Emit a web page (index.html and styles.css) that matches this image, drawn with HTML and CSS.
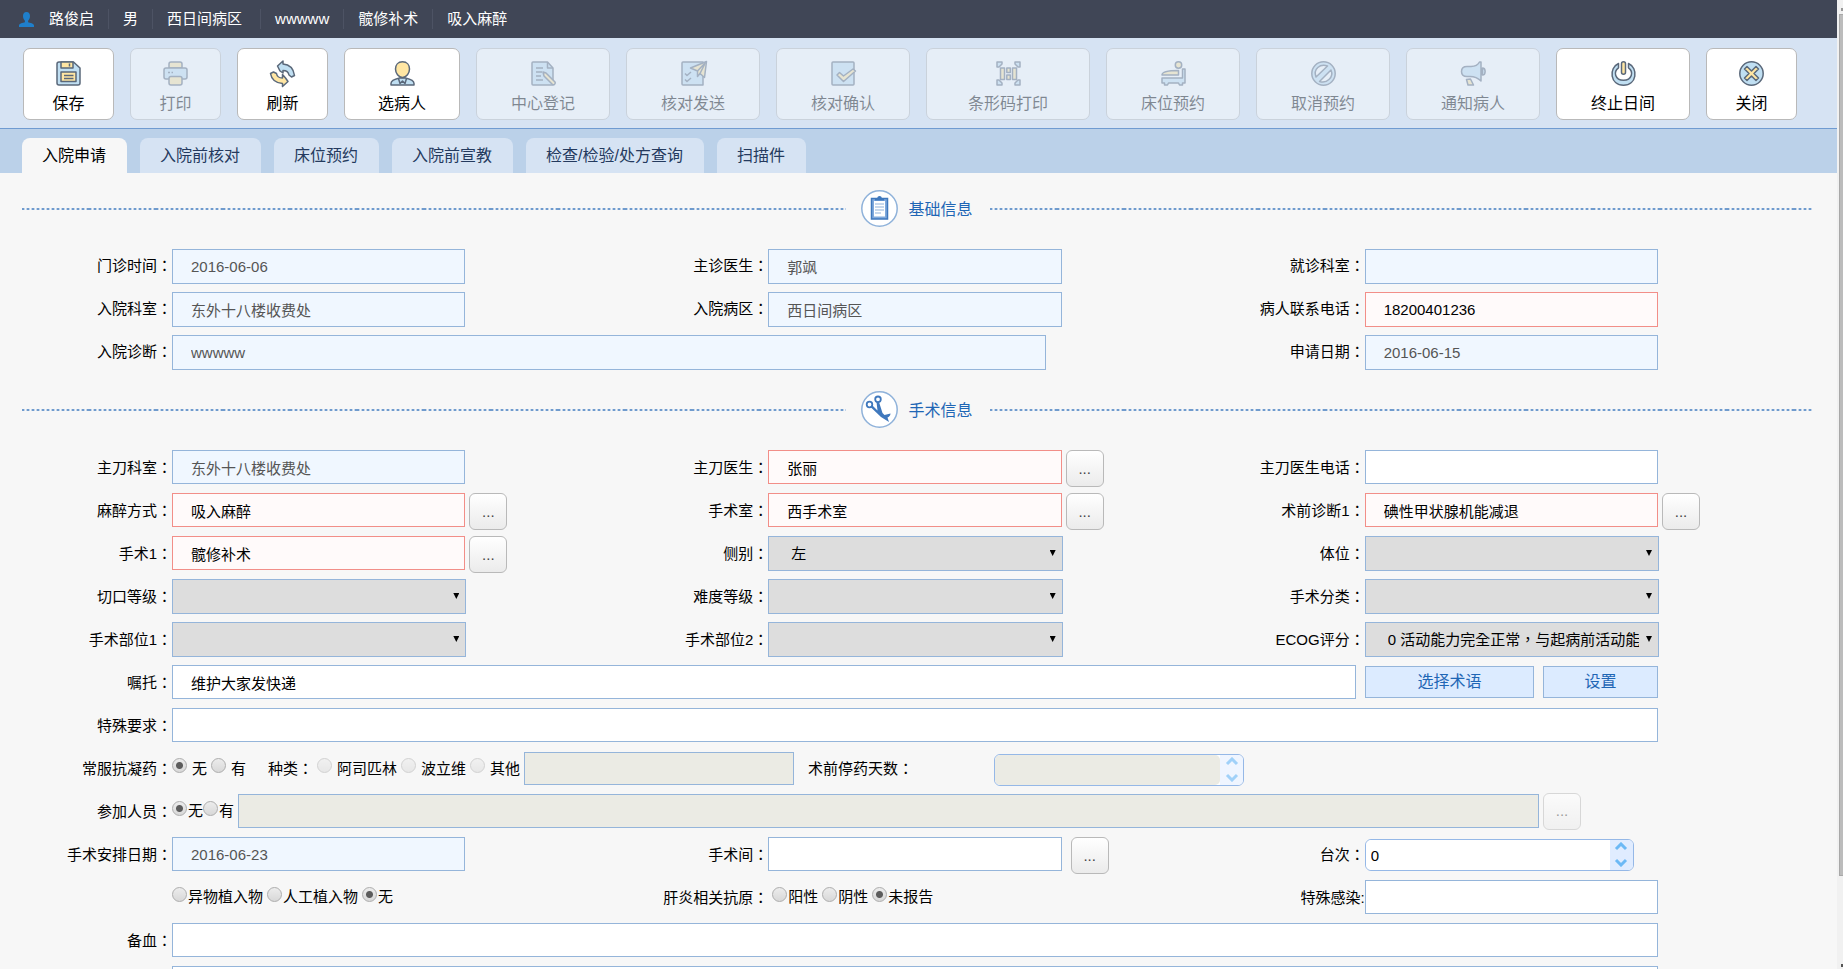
FILE: index.html
```html
<!DOCTYPE html>
<html lang="zh-CN">
<head>
<meta charset="utf-8">
<title>入院申请</title>
<link rel="stylesheet" href="styles.css">
</head>
<body>
<div class="page">
  <header class="patient">
    <svg class="avatar" viewBox="0 0 15 15" aria-hidden="true"><path d="M7.500 0C5 0 4 1.800 4 4c0 2 .8 3.800 1.900 4.700v1.500C4 10.800 0 11.300 0 13.500V15h15v-1.500c0-2.200-4-2.700-5.900-3.300V8.700C10.200 7.800 11 6 11 4c0-2.200-1-4-3.500-4z"/></svg>
    <ul class="patient-list">
      <li>路俊启</li><li>男</li><li class="ward">西日间病区</li><li>wwwww</li><li>髋修补术</li><li>吸入麻醉</li>
    </ul>
  </header>

  <div class="toolbar">
    <button type="button" class="tool w2">
      <svg viewBox="0 0 25 25"><path class="b" d="M3 1h14.500L24 7v15a2 2 0 0 1-2 2H3a2 2 0 0 1-2-2V3a2 2 0 0 1 2-2z"/><path class="y" d="M5 1h12v6H5zM5 11h15v9.500H5z"/><path class="n" d="M13.500 2.500v3M8 14.500h9.500M8 17.500h9.500"/></svg>
      <span>保存</span></button>
    <button type="button" class="tool w2" disabled>
      <svg viewBox="0 0 25 25"><path class="y" d="M6 7V3a2 2 0 0 1 2-2h9a2 2 0 0 1 2 2v4z"/><path class="b" d="M3 7h19a2 2 0 0 1 2 2v7a2 2 0 0 1-2 2H3a2 2 0 0 1-2-2V9a2 2 0 0 1 2-2z"/><path class="y" d="M8 15.500h9a2 2 0 0 1 2 2V22a2 2 0 0 1-2 2H8a2 2 0 0 1-2-2v-4.500a2 2 0 0 1 2-2z"/><path class="n" d="M5 11.500h2M8.500 11.500h1.500"/></svg>
      <span>打印</span></button>
    <button type="button" class="tool w2">
      <svg viewBox="0 0 25 25"><path class="b" d="M7.500 5 13 0v3c6 .5 10.500 4 11.500 11.500l-3 1.500-2.500-2c-.5-3-2.500-4.500-6-4.500V12L10 10z"/><path class="y" d="M18 20.500 12.500 25.500v-3C6 22 1.500 18.500.5 12.500L3.500 11l3 1.500c.5 3 2.500 4.500 6 4.500v-3.500l3 3.500z"/></svg>
      <span>刷新</span></button>
    <button type="button" class="tool w3">
      <svg viewBox="0 0 25 25"><path class="b" d="M1 24v-1.500c0-3 4-4.500 8.500-5.500h6c4.500 1 8.500 2.500 8.500 5.500V24z"/><path class="y" d="M12.500.8c4.500 0 7 3.200 7 7.200s-3 8.500-7 8.500S5.500 12 5.500 8s2.500-7.200 7-7.200z"/><path class="n" d="m8.500 17.500 1.500 5 2.500-2.500 2.500 2.500 1.500-5"/></svg>
      <span>选病人</span></button>
    <button type="button" class="tool w4" disabled>
      <svg viewBox="0 0 25 25"><path class="b" d="M2 1h14.500L22 7v17H2a1 1 0 0 1-1-1V2a1 1 0 0 1 1-1z"/><path class="n" d="M16.500 1v6H22M5 7h7M5 11h6M5 15h5M5 19h7"/><path class="y" d="m12 11 3 1 9 9c1 1.500-1 3.500-2.500 2.500L13 15z"/></svg>
      <span>中心登记</span></button>
    <button type="button" class="tool w4" disabled>
      <svg viewBox="0 0 25 25"><path class="b" d="M2 1h20v23H2a1 1 0 0 1-1-1V2a1 1 0 0 1 1-1z"/><path class="n" d="m4 12.500 2 2 4-3.500M4 18.500l2 2 4-3.500"/><path class="y" d="m9.500 7 16-6.500-2 16-4.500-4-2.500 3V10z"/><path class="n" d="m16.500 10 8-8.500-5.500 11"/></svg>
      <span>核对发送</span></button>
    <button type="button" class="tool w4" disabled>
      <svg viewBox="0 0 25 25"><path class="b" d="M2 1h20a1 1 0 0 1 1 1v21a1 1 0 0 1-1 1H2a1 1 0 0 1-1-1V2a1 1 0 0 1 1-1z"/><path class="y" d="m6 14 2.500-2.500 4 3.500L22 8l2.500 2-12 10.500z"/></svg>
      <span>核对确认</span></button>
    <button type="button" class="tool w5" disabled>
      <svg viewBox="0 0 25 25"><path class="b" d="M1 6V1h5v2L3 6zM24 6V1h-5v2l3 3zM1 19v5h5v-2l-3-3zM24 19v5h-5v-2l3-3z"/><path class="y" d="M4.500 7h4v11.500h-4zM16.500 7h4v11.500h-4zM10.800 7h3.500v4.500h-3.500zM10.800 14h3.500v4.500h-3.500z"/></svg>
      <span>条形码打印</span></button>
    <button type="button" class="tool w4" disabled>
      <svg viewBox="0 0 25 25"><circle class="y" cx="17.500" cy="4" r="3.200"/><path class="y" d="M1 14c0-3 7-4.500 16.500-4.500V14z"/><path class="b" d="M1 17h20.500V8H24v14h-2.500v2h-3l-1-2h-10l-1 2h-3v-2H1z"/></svg>
      <span>床位预约</span></button>
    <button type="button" class="tool w4" disabled>
      <svg viewBox="0 0 25 25"><circle class="b" cx="12.500" cy="12.500" r="11.700"/><path class="p" d="M5 16C2 8 9 2.500 16.500 5zM8.500 20.500 20 9c3 7-4 14-11.500 11.500z"/></svg>
      <span>取消预约</span></button>
    <button type="button" class="tool w4" disabled>
      <svg viewBox="0 0 25 25"><path class="b" d="M20 1v19c-3-3-7-4.500-11-4.500H6c-3.500 0-5.500-2-5.500-5s2-5 5.500-5h4C14 5.500 17 4 18.500 1zM21.500 7c3.500 0 3.500 7 0 7z"/><path class="y" d="m5.500 18.500 4-.5 3 6h-5.500z"/></svg>
      <span>通知病人</span></button>
    <button type="button" class="tool w4">
      <svg viewBox="0 0 25 25"><path class="b" d="M7.500 2.500C-2.500 7-1 24.200 12.500 24.200S27.500 7 17.500 2.500v4.300c5.500 4 3.500 12.500-5 12.500s-10.500-8.500-5-12.500z"/><rect class="y" x="10.500" y=".8" width="4" height="12.500" rx="2"/></svg>
      <span>终止日间</span></button>
    <button type="button" class="tool w2">
      <svg viewBox="0 0 25 25"><circle class="b" cx="12.500" cy="12.500" r="11.700"/><path class="y" d="m8 5.500 4.500 4.500L17 5.500 19.500 8 15 12.500l4.500 4.500-2.500 2.500-4.500-4.500L8 19.500 5.500 17l4.500-4.500L5.500 8z"/></svg>
      <span>关闭</span></button>
  </div>

  <nav class="tabs">
    <a class="tab active" href="#apply">入院申请</a>
    <a class="tab" href="#check">入院前核对</a>
    <a class="tab" href="#bed">床位预约</a>
    <a class="tab" href="#teach">入院前宣教</a>
    <a class="tab" href="#query">检查/检验/处方查询</a>
    <a class="tab" href="#scan">扫描件</a>
  </nav>

  <main id="apply">
    <div class="section-head">
      <i class="rule"></i>
      <svg class="badge" viewBox="0 0 37 37" aria-hidden="true"><circle cx="18.500" cy="18.500" r="17.700" fill="#fff" stroke="#8fb2da" stroke-width="1.500"/><path d="M10.500 8.500h16v20.500h-16z" fill="#7fa9dc" stroke="#3f78bd" stroke-width="1.500"/><path d="M13 11h11v15.500H13z" fill="#fff"/><path d="M14 10.500V8.200h2.300c0-3 4.500-3 4.500 0H23v2.300z" fill="#3f78bd"/><path d="M14 14h9M14 17h9M14 20h9M14 23h6" stroke="#8fb2da" stroke-width="1.200"/></svg>
      <h2>基础信息</h2>
      <i class="rule"></i>
    </div>
    <div class="form basic">
      <div class="cell"><label for="f1">门诊时间<span class="c" lang="zh-TW">：</span></label><input id="f1" class="ro" value="2016-06-06" readonly></div>
      <div class="cell"><label for="f2">主诊医生<span class="c" lang="zh-TW">：</span></label><input id="f2" class="ro" value="郭飒" readonly></div>
      <div class="cell"><label for="f3">就诊科室<span class="c" lang="zh-TW">：</span></label><input id="f3" class="ro" readonly></div>
      <div class="cell"><label for="f4">入院科室<span class="c" lang="zh-TW">：</span></label><input id="f4" class="ro" value="东外十八楼收费处" readonly></div>
      <div class="cell"><label for="f5">入院病区<span class="c" lang="zh-TW">：</span></label><input id="f5" class="ro" value="西日间病区" readonly></div>
      <div class="cell"><label for="f6">病人联系电话<span class="c" lang="zh-TW">：</span></label><input id="f6" class="must" value="18200401236"></div>
      <div class="cell two"><label for="f7">入院诊断<span class="c" lang="zh-TW">：</span></label><input id="f7" class="ro" value="wwwww" readonly></div>
      <div class="cell"><label for="f8">申请日期<span class="c" lang="zh-TW">：</span></label><input id="f8" class="ro" value="2016-06-15" readonly></div>
    </div>

    <div class="section-head">
      <i class="rule"></i>
      <svg class="badge" viewBox="0 0 37 37" aria-hidden="true"><circle cx="18.500" cy="18.500" r="17.700" fill="#fff" stroke="#8fb2da" stroke-width="1.500"/><g fill="none" stroke="#3f78bd" stroke-width="1.800"><circle cx="8.500" cy="13.500" r="2.800"/><circle cx="17" cy="8.300" r="2.800"/></g><path d="m9.500 16 2-1.500 5 5L15.500 11h2.500l3.500 11 2 2 6-1.500c0 2-1.500 3.500-3 4l1.500 4.500-8-5z" fill="#3f78bd"/></svg>
      <h2>手术信息</h2>
      <i class="rule"></i>
    </div>
    <div class="form surgery">
      <div class="cell"><label for="s1">主刀科室<span class="c" lang="zh-TW">：</span></label><input id="s1" class="ro" value="东外十八楼收费处" readonly></div>
      <div class="cell"><label for="s2">主刀医生<span class="c" lang="zh-TW">：</span></label><input id="s2" class="must" value="张丽"><button type="button" class="more">...</button></div>
      <div class="cell"><label for="s3">主刀医生电话<span class="c" lang="zh-TW">：</span></label><input id="s3"></div>

      <div class="cell"><label for="s4">麻醉方式<span class="c" lang="zh-TW">：</span></label><input id="s4" class="must" value="吸入麻醉"><button type="button" class="more">...</button></div>
      <div class="cell"><label for="s5">手术室<span class="c" lang="zh-TW">：</span></label><input id="s5" class="must" value="西手术室"><button type="button" class="more">...</button></div>
      <div class="cell"><label for="s6">术前诊断1<span class="c" lang="zh-TW">：</span></label><input id="s6" class="must" value="碘性甲状腺机能减退"><button type="button" class="more">...</button></div>

      <div class="cell"><label for="s7">手术1<span class="c" lang="zh-TW">：</span></label><input id="s7" class="must" value="髋修补术"><button type="button" class="more">...</button></div>
      <div class="cell"><label for="s8">侧别<span class="c" lang="zh-TW">：</span></label><div class="pick"><select id="s8"><option>左</option></select></div></div>
      <div class="cell"><label for="s9">体位<span class="c" lang="zh-TW">：</span></label><div class="pick"><select id="s9"><option></option></select></div></div>

      <div class="cell"><label for="s10">切口等级<span class="c" lang="zh-TW">：</span></label><div class="pick"><select id="s10"><option></option></select></div></div>
      <div class="cell"><label for="s11">难度等级<span class="c" lang="zh-TW">：</span></label><div class="pick"><select id="s11"><option></option></select></div></div>
      <div class="cell"><label for="s12">手术分类<span class="c" lang="zh-TW">：</span></label><div class="pick"><select id="s12"><option></option></select></div></div>

      <div class="cell"><label for="s13">手术部位1<span class="c" lang="zh-TW">：</span></label><div class="pick"><select id="s13"><option></option></select></div></div>
      <div class="cell"><label for="s14">手术部位2<span class="c" lang="zh-TW">：</span></label><div class="pick"><select id="s14"><option></option></select></div></div>
      <div class="cell"><label for="s15">ECOG评分<span class="c" lang="zh-TW">：</span></label><div class="pick"><select id="s15" class="c" lang="zh-TW"><option>0 活动能力完全正常，与起病前活动能力无任何差异</option></select></div></div>

      <div class="cell all"><label for="s16">嘱托<span class="c" lang="zh-TW">：</span></label><div class="line order"><input id="s16" class="grow" value="维护大家发快递"><button type="button" class="act term">选择术语</button><button type="button" class="act set">设置</button></div></div>
      <div class="cell all"><label for="s17">特殊要求<span class="c" lang="zh-TW">：</span></label><input id="s17"></div>

      <div class="cell all"><span class="label">常服抗凝药<span class="c" lang="zh-TW">：</span></span>
        <div class="line drug">
          <label class="opt wide"><input type="radio" name="drug" checked>无</label>
          <label class="opt wide"><input type="radio" name="drug">有</label>
          <span class="kind">种类<span class="c" lang="zh-TW">：</span></span>
          <label class="opt wide"><input type="radio" name="kind" disabled>阿司匹林</label>
          <label class="opt wide"><input type="radio" name="kind" disabled>波立维</label>
          <label class="opt wide"><input type="radio" name="kind" disabled>其他</label>
          <input class="other" aria-label="其他" disabled>
          <label class="days" for="s18">术前停药天数<span class="c" lang="zh-TW">：</span></label>
          <div class="spin off"><input id="s18" disabled><div class="arrows"><button type="button" aria-label="增加" disabled><svg viewBox="0 0 14 9"><path d="m2 7 5-5 5 5"/></svg></button><button type="button" aria-label="减少" disabled><svg viewBox="0 0 14 9"><path d="m2 2 5 5 5-5"/></svg></button></div></div>
        </div></div>

      <div class="cell all"><span class="label">参加人员<span class="c" lang="zh-TW">：</span></span>
        <div class="line staff">
          <label class="opt"><input type="radio" name="staff" checked>无</label>
          <label class="opt"><input type="radio" name="staff">有</label>
          <input class="grow" aria-label="参加人员" disabled>
          <button type="button" class="more" disabled>...</button>
        </div></div>

      <div class="cell"><label for="s19">手术安排日期<span class="c" lang="zh-TW">：</span></label><input id="s19" class="ro" value="2016-06-23" readonly></div>
      <div class="cell room"><label for="s20">手术间<span class="c" lang="zh-TW">：</span></label><input id="s20"><button type="button" class="more">...</button></div>
      <div class="cell turn"><label for="s21">台次<span class="c" lang="zh-TW">：</span></label><div class="spin"><input id="s21" value="0"><div class="arrows"><button type="button" aria-label="增加"><svg viewBox="0 0 14 9"><path d="m2 7 5-5 5 5"/></svg></button><button type="button" aria-label="减少"><svg viewBox="0 0 14 9"><path d="m2 2 5 5 5-5"/></svg></button></div></div></div>

      <div class="cell"><span class="label"></span>
        <div class="line group">
          <label class="opt"><input type="radio" name="implant">异物植入物</label>
          <label class="opt"><input type="radio" name="implant">人工植入物</label>
          <label class="opt"><input type="radio" name="implant" checked>无</label>
        </div></div>
      <div class="cell"><span class="label">肝炎相关抗原<span class="c" lang="zh-TW">：</span></span>
        <div class="line group inset">
          <label class="opt"><input type="radio" name="hep">阳性</label>
          <label class="opt"><input type="radio" name="hep">阴性</label>
          <label class="opt"><input type="radio" name="hep" checked>未报告</label>
        </div></div>
      <div class="cell"><label for="s22">特殊感染:</label><input id="s22"></div>

      <div class="cell all"><label for="s23">备血<span class="c" lang="zh-TW">：</span></label><input id="s23"></div>
      <div class="cell all"><span class="label"></span><input aria-label="备注"></div>
    </div>
  </main>
</div>
<div class="scrollbar" aria-hidden="true"><i class="up"></i><i class="thumb"></i><i class="down"></i></div>
</body>
</html>
```
FILE: styles.css
```css
* { box-sizing: border-box; }

html { height: 100%; }

body {
  margin: 0;
  height: 100vh;
  display: flex;
  overflow: hidden;
  background: #f7f7f7;
  color: #000;
  font: 15px/20px "Liberation Sans", "Noto Sans CJK SC", sans-serif;
}

input, select, button { font: inherit; color: inherit; margin: 0; }

.page { flex: 1; min-width: 0; }

/* patient bar */
.patient {
  display: flex;
  align-items: center;
  height: 38px;
  padding-left: 19px;
  background: #404656;
  color: #fff;
}
.avatar { width: 15px; height: 15px; fill: #1f7fcb; }
.patient-list { display: flex; margin: 0; padding: 0; list-style: none; }
.patient-list li { padding: 0 14px; border-right: 1px solid #4d5364; }
.patient-list li:first-child { padding-left: 15px; }
.patient-list li:last-child { border-right: 0; }
.patient-list .ward { padding-right: 18px; }

/* toolbar */
.toolbar {
  display: flex;
  gap: 16px;
  padding: 10px 23px 8px;
  background: #d6e3f3;
  border-bottom: 1px solid #6f9bd1;
}
.tool {
  display: flex;
  flex-direction: column;
  align-items: center;
  gap: 8px;
  height: 72px;
  padding: 12px 0 0;
  background: #fff;
  border: 1px solid #b9b9b9;
  border-radius: 7px;
  font-size: 16px;
}
.tool:disabled { opacity: .4; }
.tool svg {
  width: 25px;
  height: 25px;
  overflow: visible;
  stroke: #5a687a;
  stroke-width: 1.5;
  stroke-linejoin: round;
}
.tool .b { fill: #c0dff2; }
.tool .y { fill: #ffe6a3; }
.tool .n { fill: none; }
.tool .p { fill: #fff; }
.w2 { width: 91px; }
.w3 { width: 116px; }
.w4 { width: 134px; }
.w5 { width: 164px; }

/* tabs */
.tabs {
  display: flex;
  gap: 13px;
  padding: 9px 22px 0;
  background: #bbd1e9;
}
.tab {
  height: 35px;
  padding: 0 21px 0 20px;
  line-height: 36px;
  font-size: 16px;
  color: #243a5e;
  text-decoration: none;
  background: #d6e3f3;
  border-radius: 8px 8px 0 0;
}
.tab.active { background: #f7f7f7; color: #000; }

/* form sections */
main { padding: 17px 24px 0 22px; }

.section-head { display: flex; align-items: center; }
.form + .section-head { margin-top: 21px; }
.rule {
  flex: 1;
  height: 2px;
  background: repeating-linear-gradient(90deg, #709bcd 0 2px, #c3d5ea 2px 3px, #f7f7f7 3px 4px, #c3d5ea 4px 5px) 0 0 / 67px 2px;
}
.badge { width: 37px; height: 37px; margin: 0 11px 0 15px; }
h2 {
  margin: 0 17px 0 0;
  padding-top: 2px;
  font-size: 16px;
  line-height: 24px;
  font-weight: normal;
  color: #1f66b5;
}

.form {
  display: grid;
  grid-template-columns: repeat(3, minmax(0, 1fr));
  margin: 22px 2px 0 0;
}
.basic { grid-auto-rows: 35px; gap: 8px 0; }
.surgery { grid-auto-rows: 34px; gap: 9px 0; }

.cell {
  display: grid;
  grid-template: 100% / 150px minmax(0, 1fr) 153px;
}
.cell.two { grid-column: span 2; grid-template-columns: 150px minmax(0, 1fr) 169px; }
.cell.all { grid-column: 1 / -1; }
.cell > label, .cell > .label { text-align: right; line-height: 34px; white-space: nowrap; }
.surgery .cell > label, .surgery .cell > .label { line-height: 36px; }
.c { font-family: "Liberation Sans", "Noto Sans CJK TC", sans-serif; }

.cell input:not([type="radio"]) {
  min-width: 0;
  height: 100%;
  padding: 0 18px;
  background: #fff;
  border: 1px solid #95b5da;
  outline: 0;
}
.cell input.ro { background: #f0f7ff; color: #555; }
.cell input.must { background: #fffafa; border-color: #f28e88; }
.cell input:not([type="radio"]):disabled { background: #ebebe4; }

.pick { position: relative; width: calc(100% + 1px); height: 35px; }
.pick select {
  width: 100%;
  height: 35px;
  padding: 0 19px 0 22px;
  appearance: none;
  background: #ddd;
  border: 1px solid #95b5da;
  border-radius: 0;
}
.pick::after {
  content: "";
  position: absolute;
  top: 14px;
  right: 7px;
  width: 6px;
  height: 6px;
  background: #000;
  clip-path: polygon(0 0, 100% 0, 50% 100%);
  pointer-events: none;
}

.more {
  width: 38px;
  height: 37px;
  padding: 0;
  background: linear-gradient(#fff, #ebebeb);
  border: 1px solid #b9b9b9;
  border-radius: 6px;
  color: #444;
}
.cell .more { margin-left: 4px; }
.room .more { margin-left: 9px; }
.more:disabled { opacity: .5; }

.line { display: flex; align-items: center; }
.grow { flex: 1; }
.act {
  height: 32px;
  padding: 0;
  background: #dcebff;
  border: 1px solid #95b5da;
  font-size: 16px;
  color: #1f66b5;
}
.term { width: 169px; margin: 0 9px; }
.set { width: 115px; }

/* radios */
.opt { display: flex; align-items: center; gap: 1px; line-height: 22px; white-space: nowrap; }
.opt.wide { gap: 5px; }
.opt input {
  width: 15px;
  height: 15px;
  margin-bottom: 6px;
  appearance: none;
  border: 1px solid #adadad;
  border-radius: 50%;
  background: linear-gradient(#ececec, #d8d8d8);
}
.opt input:checked {
  background: radial-gradient(circle, #5c5c5c 0 3px, transparent 4px), linear-gradient(#ececec, #d8d8d8);
}
.opt input:disabled { opacity: .5; }
.drug { padding-top: 1px; }
.drug .opt { margin-right: 4px; }
.kind { margin: 0 4px 0 18px; }
.other { width: 270px; }
.days { width: 200px; padding-left: 14px; }
.staff { grid-column: 2 / -1; margin-right: 230px; }
.staff .grow { margin-left: 4px; }
.group { gap: 4px; }
.inset { padding-left: 4px; }

/* number spinner */
.spin {
  display: flex;
  width: 250px;
  height: 32px;
  margin-top: 2px;
  border: 1px solid #95b8e7;
  border-radius: 6px;
  background: #fff;
  overflow: hidden;
}
.cell .spin input:not([type="radio"]) { flex: 1; padding: 0 5px; border: 0; border-radius: 5px; }
.turn .spin { width: auto; margin-right: 24px; }
.arrows {
  display: flex;
  flex-direction: column;
  justify-content: space-between;
  width: 23px;
  padding: 2px 0 3px;
  background: #e0ecff;
}
.arrows button { display: flex; justify-content: center; padding: 0; border: 0; background: none; }
.arrows svg { width: 14px; height: 9px; fill: none; stroke: #6cb9f5; stroke-width: 3; }
.off .arrows { background: #eff5ff; }
.off .arrows svg { opacity: .6; }

/* page scrollbar strip */
.scrollbar {
  display: flex;
  flex-direction: column;
  align-items: flex-end;
  justify-content: space-between;
  width: 6px;
  background: #f1f1f1;
}
.up, .down { width: 2px; height: 3px; }
.up { margin-top: 8px; background: #999; }
.down { background: #555; margin-bottom: 2px; }
.thumb {
  flex: 0 0 auto;
  width: 4px;
  height: 89%;
  margin: 3px 0 auto;
  background: #bcbcbc;
  border: 1px solid #a8a8a8;
  border-right: 0;
}
```
